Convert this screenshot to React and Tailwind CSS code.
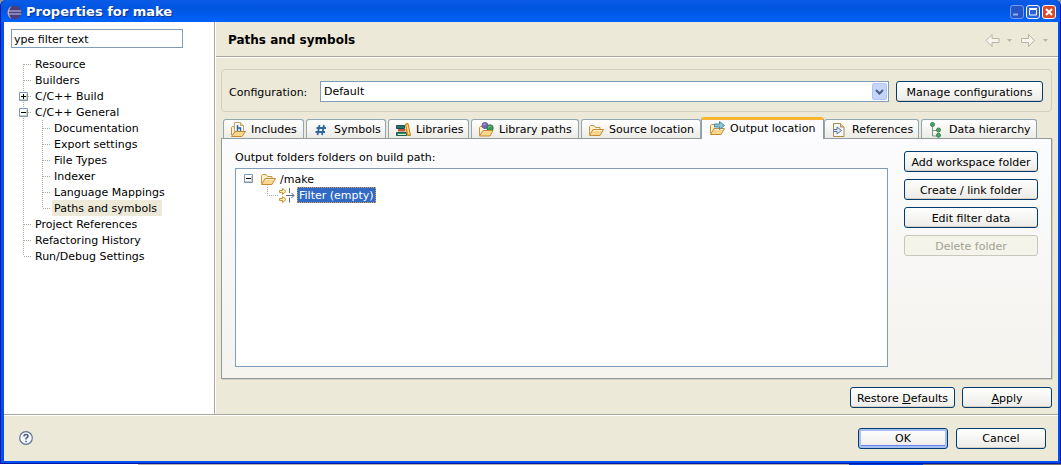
import React from "react";

const dots = { stroke: "#aca899", strokeWidth: 1, strokeDasharray: "1 1", fill: "none" };

function Expander({ x, y, open }) {
  return (
    <g transform={`translate(${x} ${y})`}>
      <rect x="0" y="0" width="9" height="9" rx="1" fill="#7898b5" />
      <rect x="1" y="1" width="7" height="7" fill="#fff" />
      <path d="M1 8V7h6V2h1v6z" fill="#cfcabb" />
      <path d={open ? "M2 4h5v1H2z" : "M2 4h5v1H2zM4 2h1v5H4z"} fill="#000" />
    </g>
  );
}

function FolderBase() {
  return (
    <>
      <path d="M1.500 12.500v-8l1-1h3.500l1.500 2h4.500v2" fill="#fff3d0" stroke="#c9923f" />
      <path d="M1.500 13.500 5 7.500h10.500l-3.500 6z" fill="#fbd68c" stroke="#c48a35" strokeLinejoin="round" />
      <path d="M5.500 8.500h8.500" stroke="#fff3cf" />
    </>
  );
}

function Icon({ name }) {
  return (
    <svg width="16" height="16" viewBox="0 0 16 16" fill="none" className="shrink-0" aria-hidden="true">
      {name === "includes" && (
        <>
          <path d="M1.500 13V5.500l1-1H5" fill="#fff0c0" stroke="#c9923f" />
          <path d="M4.500 11V.5h6l3 3V10z" fill="#f6f9fd" stroke="#c2a566" />
          <path d="M10.500.5v3h3" fill="#efe2b8" stroke="#c2a566" />
          <path d="M7.500 3v6M8 6h2.500v3" stroke="#2d5f98" strokeWidth="1.400" />
          <path d="M1.500 14.500 5 9.500h10.500L12 14.500z" fill="#fbd68c" stroke="#c48a35" strokeLinejoin="round" />
        </>
      )}
      {name === "symbols" && <path d="M6.500 3 4.500 13M11 3 9 13M3.500 6H13M2.500 10H12" stroke="#2f699f" strokeWidth="1.800" />}
      {name === "libraries" && (
        <>
          <path d="M1.500 3.500h8v3h-8z" fill="#24766d" stroke="#174e56" />
          <path d="M3 7h7.500v2.500H3z" fill="#c05a38" />
          <path d="M1.500 10.500h10v3h-10z" fill="#35906c" stroke="#1b5e4a" />
          <path d="M3 12.500h8" stroke="#d6ecd8" />
          <path d="m10.500 2 2.500-.5 2.500 12H12.500z" fill="#f7b731" stroke="#c4811f" />
          <path d="m12 3 2 9" stroke="#ffe48a" />
        </>
      )}
      {name === "paths" && (
        <>
          <path d="M1.500 13V5.500l1-1H5" fill="#fff0c0" stroke="#c9923f" />
          <circle cx="7" cy="3.500" r="3" fill="#7b68b5" stroke="#6a58a0" />
          <circle cx="12" cy="6" r="3.200" fill="#3b9a55" stroke="#2d7c46" />
          <path d="M5.500 3q1-1.500 2-1M10.500 5.500q1-1.500 2-1" stroke="#c8cce8" />
          <path d="M1.500 14 5 8.500h10L12 14z" fill="#fbd68c" stroke="#c48a35" strokeLinejoin="round" />
        </>
      )}
      {name === "source" && <FolderBase />}
      {name === "output" && (
        <>
          <FolderBase />
          <path d="M5.500 3h5V.5l5 4-5 4V6h-5z" fill="#8fc3d6" stroke="#4a8ba5" />
        </>
      )}
      {name === "references" && (
        <>
          <path d="M2.500 1.500h7l3.500 3.500v9.500H2.500z" fill="#f4f7fc" stroke="#a98d47" />
          <path d="M9.500 1.500V5H13" fill="#ead69c" stroke="#a98d47" />
          <path d="M2.500 7.500h3.500V5l4.500 3.500-4.500 3.500V9.500H2.500z" fill="#dce6f6" stroke="#6277a8" />
        </>
      )}
      {name === "hierarchy" && (
        <>
          <path d="M4.500 4v10H9M4.500 8.500H9" stroke="#83918a" />
          <circle cx="4.500" cy="2.500" r="2" fill="#49a765" stroke="#37834c" />
          <circle cx="10.500" cy="8" r="2" fill="#49a765" stroke="#37834c" />
          <circle cx="10.500" cy="13.300" r="2" fill="#49a765" stroke="#37834c" />
        </>
      )}
      {name === "filter" && (
        <>
          <path
            d="M.5 3.500h3v-2l3.500 3-3.500 3v-2h-3zM.5 11.500h3v-2l3.500 3-3.500 3v-2h-3z"
            fill="#fff0b5"
            stroke="#c4963c"
          />
          <path d="M10.500 1v5M10.500 10.500v5M7 8.500h8M12.500 6 15 8.500 12.500 11" stroke="#566780" />
        </>
      )}
    </svg>
  );
}

const tree = [
  { label: "Resource" },
  { label: "Builders" },
  { label: "C/C++ Build", box: "closed" },
  { label: "C/C++ General", box: "open" },
  { label: "Documentation", child: true },
  { label: "Export settings", child: true },
  { label: "File Types", child: true },
  { label: "Indexer", child: true },
  { label: "Language Mappings", child: true },
  { label: "Paths and symbols", child: true, selected: true, lastChild: true },
  { label: "Project References" },
  { label: "Refactoring History" },
  { label: "Run/Debug Settings", last: true },
];

function TreeRow({ item, first }) {
  const w = item.child ? 33 : 14;
  return (
    <li className="flex h-4 items-center">
      <svg width={w} height="16" className="shrink-0" aria-hidden="true">
        <path d={`M4.500 ${first ? 8 : 0}V${item.last ? 8 : 16}`} {...dots} />
        {item.child ? (
          <path d={`M23.500 0V${item.lastChild ? 8 : 16}M24 8.500H31`} {...dots} />
        ) : (
          <path d="M5 8.500H13" {...dots} />
        )}
        {item.box && <Expander x={0} y={4} open={item.box === "open"} />}
      </svg>
      <span className={`h-4 pr-[5px] pl-0.5 leading-[18px] ${item.selected ? "bg-[#ece9d8]" : ""}`}>{item.label}</span>
    </li>
  );
}

const tabs = [
  { id: "includes", label: "Includes", width: "w-[81px]" },
  { id: "symbols", label: "Symbols", width: "w-[80px]" },
  { id: "libraries", label: "Libraries", width: "w-[81px]" },
  { id: "paths", label: "Library paths", width: "w-[108px]" },
  { id: "source", label: "Source location", width: "w-[120px]" },
  { id: "output", label: "Output location", width: "w-[123px]", active: true },
  { id: "references", label: "References", width: "w-[95px]" },
  { id: "hierarchy", label: "Data hierarchy", width: "w-[116px]" },
];

function Button({ children, className = "", primary, disabled }) {
  const look = disabled
    ? "border-[#c9c7ba] bg-[#f5f4ea] text-[#a1a192]"
    : primary
      ? "border-[#003c74] bg-linear-to-b from-white to-[#ecebe6] shadow-[inset_0_0_0_2px_#a5c0f0,inset_0_-3px_0_#6982ee]"
      : "border-[#003c74] bg-linear-to-b from-white to-[#ecebe6] shadow-[inset_0_-1px_0_#d6d0c5]";
  return (
    <button
      type="button"
      disabled={disabled}
      className={`flex h-[21px] shrink-0 items-center justify-center rounded-[3px] border pt-0.5 whitespace-nowrap ${look} ${className}`}
    >
      {children}
    </button>
  );
}

function TitleButton({ label, className, children }) {
  return (
    <button type="button" aria-label={label} className={`size-3.5 rounded-[3px] border ${className}`}>
      <svg viewBox="0 0 12 12" className="size-3" fill="none" aria-hidden="true">
        {children}
      </svg>
    </button>
  );
}

function NavArrow({ label, flip }) {
  return (
    <button type="button" disabled aria-label={label} className="flex items-center gap-[7px]">
      <svg width="15" height="13" viewBox="0 0 15 13" aria-hidden="true">
        <path
          d={flip ? "M.5 4.500h7v-4l6 6-6 6v-4h-7z" : "M14 4.500H7v-4l-6 6 6 6v-4h7z"}
          fill="#f6f4ec"
          stroke="#b8b5a6"
        />
      </svg>
      <svg width="5" height="3" aria-hidden="true">
        <path d="M0 0h5L2.500 3z" fill="#b8b5a6" />
      </svg>
    </button>
  );
}

export default function App() {
  return (
    <div className="flex min-h-screen flex-col bg-[#8f9a9a] font-['DejaVu_Sans',Verdana,sans-serif] text-[11px] leading-4 text-black">
      <div className="flex flex-1 flex-col overflow-hidden rounded-t-[6px] border-x border-b border-[#0019a8] bg-[#0046e0]">
        <header className="flex h-[22px] items-center bg-linear-to-b from-[#0a5be8] via-[#0055e0] via-40% to-[#0062fb] pr-1 pl-1.5">
          <svg width="15" height="15" viewBox="0 0 15 15" className="mt-0.5" aria-hidden="true">
            <circle cx="7.500" cy="7.500" r="7" fill="#4a4080" />
            <path d="M4.500 1.200a7 7 0 0 0 0 12.600A9 9 0 0 1 4.500 1.200" fill="#c9a9bd" />
            <path d="M2 6h12.200M2 9h12.200" stroke="#c9c7e8" />
          </svg>
          <h1 className="mt-0.5 ml-1 flex-1 text-[13px] font-bold text-white [text-shadow:1px_1px_0_#08308f]">
            Properties for make
          </h1>
          <div className="mt-0.5 flex gap-0.5">
            <TitleButton label="Minimize" className="border-[#799be9] bg-[#2456ca]">
              <path d="M2 8.500h5" stroke="#8facf0" strokeWidth="2" />
            </TitleButton>
            <TitleButton label="Maximize" className="border-white bg-[#2a62df]">
              <path d="M2.500 3.500h7v5.500h-7zM2 2.500h8" stroke="#fff" />
            </TitleButton>
            <TitleButton label="Close" className="border-white bg-[#d9492a]">
              <path d="m3 3 6 6m0-6L3 9" stroke="#fff" strokeWidth="2" />
            </TitleButton>
          </div>
        </header>

        <div className="flex flex-1 flex-col border-r-2 border-b-2 border-l-[3px] border-[#0050ee] bg-[#ece9d8]">
          <div className="flex flex-1">
            <aside className="w-[211px] shrink-0 border-r border-[#aca899] bg-white pt-[7px] pl-[7px]">
              <input
                aria-label="Filter"
                defaultValue="ype filter text"
                className="h-[19px] w-[172px] border border-[#7f9db9] bg-white px-0.5 pt-0.5 outline-none"
              />
              <ul className="mt-2 ml-2">
                {tree.map((item, i) => (
                  <TreeRow key={item.label} item={item} first={i === 0} />
                ))}
              </ul>
            </aside>

            <main className="flex min-w-0 flex-1 flex-col border-l border-white">
              <div className="flex h-[35px] items-center justify-between border-b border-[#aca899] pt-0.5 pr-[10px] pl-3">
                <h2 className="text-xs font-bold">Paths and symbols</h2>
                <div className="flex gap-[9px]">
                  <NavArrow label="Back" />
                  <NavArrow label="Forward" flip />
                </div>
              </div>

              <div className="flex flex-1 flex-col border-t border-white pt-[11px] pr-[6px] pl-[5px]">
                <div className="flex h-[43px] items-center rounded-[4px] border border-[#d0d0bf] pt-0.5 pr-2 pl-[7px]">
                  <label htmlFor="configuration" className="w-[91px] shrink-0 pt-0.5">
                    Configuration:
                  </label>
                  <div className="relative flex-1">
                    <select
                      id="configuration"
                      className="block h-[21px] w-full appearance-none border border-[#7f9db9] bg-white px-[3px] outline-none"
                    >
                      <option>Default</option>
                    </select>
                    <svg
                      width="15"
                      height="17"
                      viewBox="0 0 15 17"
                      className="pointer-events-none absolute top-0.5 right-0.5"
                      aria-hidden="true"
                    >
                      <rect x=".5" y=".5" width="14" height="16" rx="1.500" fill="#c4d4fb" stroke="#b0c4f3" />
                      <path d="m4 7 3.500 3.500L11 7" fill="none" stroke="#4d6185" strokeWidth="2" />
                    </svg>
                  </div>
                  <Button className="ml-[7px] w-[147px]">Manage configurations</Button>
                </div>

                <div role="tablist" className="mt-[5px] flex h-[21px] items-end gap-0.5 pl-0.5">
                  {tabs.map((t) =>
                    t.active ? (
                      <button
                        key={t.id}
                        type="button"
                        role="tab"
                        aria-selected="true"
                        className={`z-10 -mx-0.5 -mb-px flex h-[22px] shrink-0 items-center gap-[5px] rounded-t-[3px] border-x border-t-[3px] border-x-[#919b9c] border-t-[#fcb52f] bg-[#fcfcfe] pb-0.5 pl-[7px] whitespace-nowrap ${t.width}`}
                      >
                        <Icon name={t.id} />
                        {t.label}
                      </button>
                    ) : (
                      <button
                        key={t.id}
                        type="button"
                        role="tab"
                        aria-selected="false"
                        className={`flex h-[19px] shrink-0 items-center gap-[5px] rounded-t-[3px] border border-b-0 border-[#91a7b4] bg-linear-to-b from-white to-[#ecebe6] pt-0.5 pl-1.5 whitespace-nowrap ${t.width}`}
                      >
                        <Icon name={t.id} />
                        {t.label}
                      </button>
                    ),
                  )}
                </div>

                <section className="flex flex-1 gap-4 border border-[#919b9c] bg-linear-to-b from-[#fcfcfe] to-[#f4f3ee] pt-[10px] pr-[13px] pb-[11px] pl-[13px] shadow-[1px_1px_0_#d0cebf]">
                  <div className="flex min-w-0 flex-1 flex-col">
                    <h3 className="h-4 leading-[18px]">Output folders folders on build path:</h3>
                    <ul className="mt-[3px] flex-1 border border-[#7f9db9] bg-white pt-0.5 pl-2">
                      <li className="flex h-4 items-center">
                        <svg width="16" height="16" aria-hidden="true">
                          <Expander x={0} y={3} open />
                        </svg>
                        <Icon name="source" />
                        <span className="h-4 pl-1 leading-[18px]">/make</span>
                      </li>
                      <li className="flex h-4 items-center">
                        <svg width="35" height="16" className="shrink-0" aria-hidden="true">
                          <path d="M23.500 0V8.500H35" {...dots} />
                        </svg>
                        <Icon name="filter" />
                        <span className="ml-0.5 h-4 border border-dotted border-[#e0a050] bg-[#316ac5] px-px leading-4 text-white">
                          Filter (empty)
                        </span>
                      </li>
                    </ul>
                  </div>
                  <div className="flex w-[134px] shrink-0 flex-col gap-[7px] pt-0.5">
                    <Button>Add workspace folder</Button>
                    <Button>Create / link folder</Button>
                    <Button>Edit filter data</Button>
                    <Button disabled>Delete folder</Button>
                  </div>
                </section>

                <div className="flex justify-end gap-[7px] pt-2 pb-1.5">
                  <Button className="w-[105px]">
                    <span>
                      Restore <u>D</u>efaults
                    </span>
                  </Button>
                  <Button className="w-[90px]">
                    <span>
                      <u>A</u>pply
                    </span>
                  </Button>
                </div>
              </div>
            </main>
          </div>

          <footer className="flex h-[47px] items-center justify-between border-t border-[#aca899] pr-3 pl-[15px] shadow-[inset_0_1px_0_#fff]">
            <button type="button" aria-label="Help">
              <svg width="14" height="14" viewBox="0 0 14 14" fill="none" aria-hidden="true">
                <circle cx="7" cy="7" r="6.300" fill="#f5f8fc" stroke="#5d7396" strokeWidth="1.200" />
                <path d="M5 5.500Q5 3.500 7 3.500T9 5.300Q9 6.300 7 7.300v1.200M7 9.700v1.600" stroke="#47597c" strokeWidth="1.500" />
              </svg>
            </button>
            <div className="flex gap-2">
              <Button primary className="w-[90px]">
                OK
              </Button>
              <Button className="w-[90px]">Cancel</Button>
            </div>
          </footer>
        </div>
      </div>
      <div className="flex h-px">
        <div className="w-[13%] bg-white" />
        <div className="flex-1 bg-[#b5b3ac]" />
        <div className="w-[7%] bg-[#0040d8]" />
        <div className="w-[13%] bg-[#77756e]" />
      </div>
    </div>
  );
}
